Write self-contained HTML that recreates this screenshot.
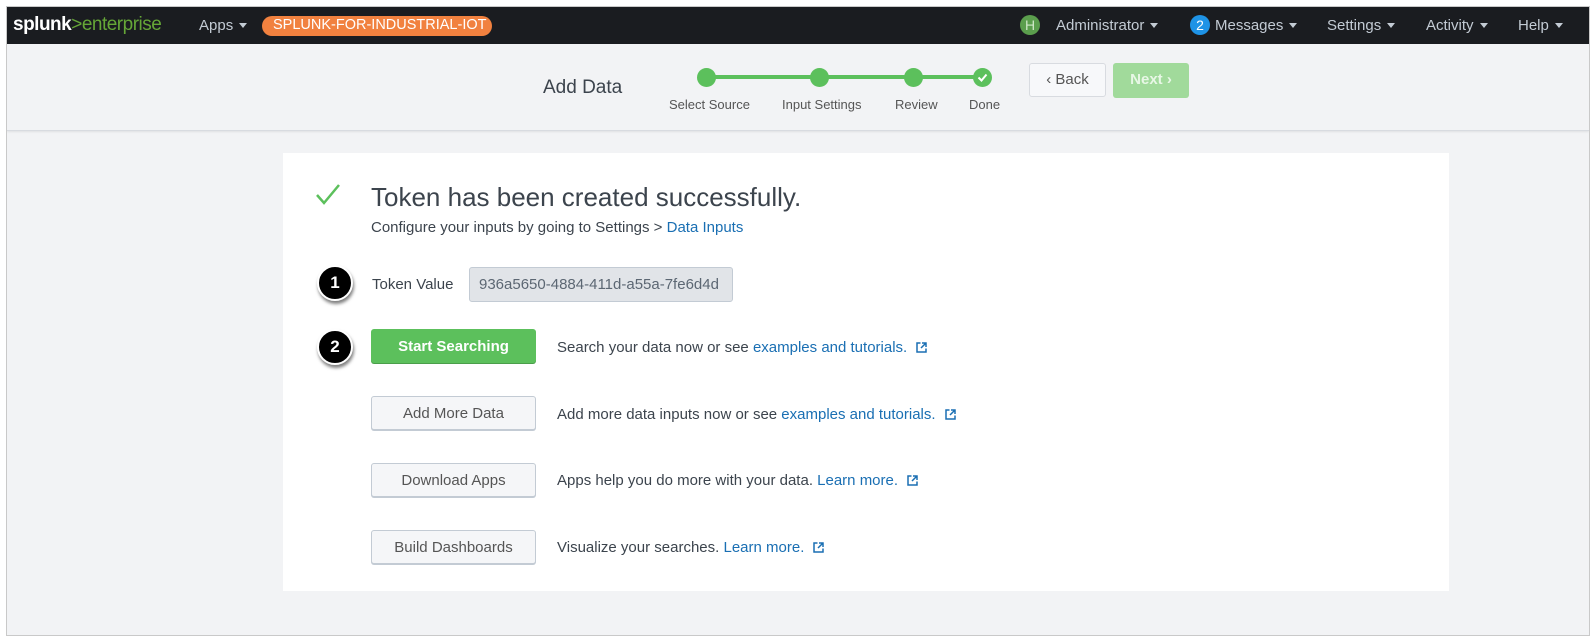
<!DOCTYPE html>
<html><head><meta charset="utf-8"><style>
*{margin:0;padding:0;box-sizing:border-box}
body{width:1596px;height:638px;background:#fff;font-family:"Liberation Sans",sans-serif;position:relative;overflow:hidden}
.frame{position:absolute;left:6px;top:6px;width:1584px;height:630px;background:#f2f3f5;border:1px solid #c9c9c9;overflow:hidden}
.hdr{position:absolute;left:0;top:0;width:100%;height:37px;background:#1a1c20;color:#c3cbd4;font-size:15px}
.hdr span{position:absolute;top:10px;white-space:nowrap}
.car{display:inline-block;width:0;height:0;border-left:4px solid transparent;border-right:4px solid transparent;border-top:5px solid #c3cbd4;margin-left:6px;vertical-align:2px}
.a{position:absolute;white-space:nowrap}
.sub{position:absolute;left:0;top:37px;width:100%;height:87px;border-bottom:1px solid #d8dbe0;box-shadow:0 1px 2px rgba(0,0,0,.08)}
.dot{position:absolute;width:19px;height:19px;border-radius:50%;background:#5cc05c;top:61px}
.lbl{position:absolute;top:90px;font-size:13px;color:#555;white-space:nowrap}
.btn{position:absolute;left:371px;width:165px;height:34px;border:1px solid #c3cbd4;border-radius:3px;background:#f5f6f8;color:#555;font-size:15px;text-align:center;line-height:33px;box-shadow:0 1px 0 #c3cbd4}
.txt{position:absolute;left:557px;font-size:15px;color:#3c444d;white-space:nowrap}
.lk{color:#1a6fb3}
.ext{margin-left:9px;vertical-align:-1px}
.badge{position:absolute;width:36px;height:36px;border-radius:50%;background:#000;border:2px solid #fff;box-shadow:1px 3px 3px rgba(0,0,0,.5);color:#fff;font-weight:bold;font-size:17px;text-align:center;line-height:32px}
</style></head><body>
<div class="frame">
<div class="hdr">
<span style="left:6px;top:7px;font-size:19px;letter-spacing:-0.5px"><b style="color:#fff;font-weight:bold">splunk</b><span style="position:static;color:#65a637">&gt;enterprise</span></span>
<span style="left:192px">Apps<i class="car"></i></span>
<span style="left:255px;top:9px;background:#f1813f;color:#fff;border-radius:10px;padding:1px 11px;height:20px;font-size:14.5px;width:230px;text-align:center">SPLUNK-FOR-INDUSTRIAL-IOT</span>
<span style="left:1013px;top:8px;width:20px;height:20px;border-radius:50%;background:#5b9e4d;color:#cfe7c8;text-align:center;line-height:20px;font-size:14px">H</span>
<span style="left:1049px">Administrator<i class="car"></i></span>
<span style="left:1183px;top:8px;width:20px;height:20px;border-radius:50%;background:#1e93e6;color:#fff;text-align:center;line-height:20px;font-size:14px">2</span>
<span style="left:1208px">Messages<i class="car"></i></span>
<span style="left:1320px">Settings<i class="car"></i></span>
<span style="left:1419px">Activity<i class="car"></i></span>
<span style="left:1511px">Help<i class="car"></i></span>
</div>
<div class="sub">
<div class="a" style="left:536px;top:33px;font-size:19px;color:#3c444d">Add Data</div>
</div>
<div class="a" style="left:697px;top:68px;width:280px;height:4px;background:#5cc05c"></div>
<div class="dot" style="left:690px"></div>
<div class="dot" style="left:803px"></div>
<div class="dot" style="left:897px"></div>
<div class="dot" style="left:966px"><svg width="19" height="19" viewBox="0 0 19 19"><path d="M5.5 9.5l3 3 5-6" fill="none" stroke="#fff" stroke-width="2"/></svg></div>
<div class="lbl" style="left:662px">Select Source</div>
<div class="lbl" style="left:775px">Input Settings</div>
<div class="lbl" style="left:888px">Review</div>
<div class="lbl" style="left:962px">Done</div>
<div class="a" style="left:1022px;top:56px;width:77px;height:34px;border:1px solid #d8dbe0;border-radius:3px;background:#f7f8fa;color:#555;font-size:15px;text-align:center;line-height:32px">‹ Back</div>
<div class="a" style="left:1106px;top:56px;width:76px;height:35px;border-radius:3px;background:#a1da9b;color:#e8f7e6;font-size:15px;font-weight:bold;text-align:center;line-height:34px">Next ›</div>
</div>
<div class="a" style="left:283px;top:153px;width:1166px;height:438px;background:#fff"></div>
<svg class="a" style="left:315px;top:182px" width="26" height="24" viewBox="0 0 26 24"><path d="M2 13l7 8L24 3" fill="none" stroke="#5cc05c" stroke-width="2.5"/></svg>
<div class="a" style="left:371px;top:182px;font-size:26px;color:#3c444d">Token has been created successfully.</div>
<div class="a" style="left:371px;top:219px;font-size:15px;color:#3c444d">Configure your inputs by going to Settings &gt; <span class="lk">Data Inputs</span></div>
<div class="badge" style="left:317px;top:265px">1</div>
<div class="a" style="left:372px;top:276px;font-size:15px;color:#3c444d">Token Value</div>
<div class="a" style="left:469px;top:267px;width:264px;height:35px;background:#e1e4e8;border:1px solid #c3cbd4;border-radius:3px;font-size:15px;color:#5c6773;line-height:33px;padding-left:9px">936a5650-4884-411d-a55a-7fe6d4d</div>
<div class="badge" style="left:317px;top:329px">2</div>
<div class="btn" style="top:329px;background:#5cc05c;border-color:#5cc05c;color:#fff;font-weight:bold;box-shadow:0 1px 0 #4a9e4a">Start Searching</div>
<svg width="0" height="0" style="position:absolute"><defs><symbol id="x" viewBox="0 0 11 11"><path d="M4.5 1H1v9h9V6.5" fill="none" stroke="#1a6fb3" stroke-width="1.5"/><path d="M6 1h4v4M10 1L5 6" fill="none" stroke="#1a6fb3" stroke-width="1.5"/></symbol></defs></svg>
<div class="txt" style="top:339px">Search your data now or see <span class="lk">examples and tutorials.</span><svg class="ext" width="11" height="11"><use href="#x"/></svg></div>
<div class="btn" style="top:396px">Add More Data</div>
<div class="txt" style="top:406px">Add more data inputs now or see <span class="lk">examples and tutorials.</span><svg class="ext" width="11" height="11"><use href="#x"/></svg></div>
<div class="btn" style="top:463px">Download Apps</div>
<div class="txt" style="top:472px">Apps help you do more with your data. <span class="lk">Learn more.</span><svg class="ext" width="11" height="11"><use href="#x"/></svg></div>
<div class="btn" style="top:530px">Build Dashboards</div>
<div class="txt" style="top:539px">Visualize your searches. <span class="lk">Learn more.</span><svg class="ext" width="11" height="11"><use href="#x"/></svg></div>
</body></html>
